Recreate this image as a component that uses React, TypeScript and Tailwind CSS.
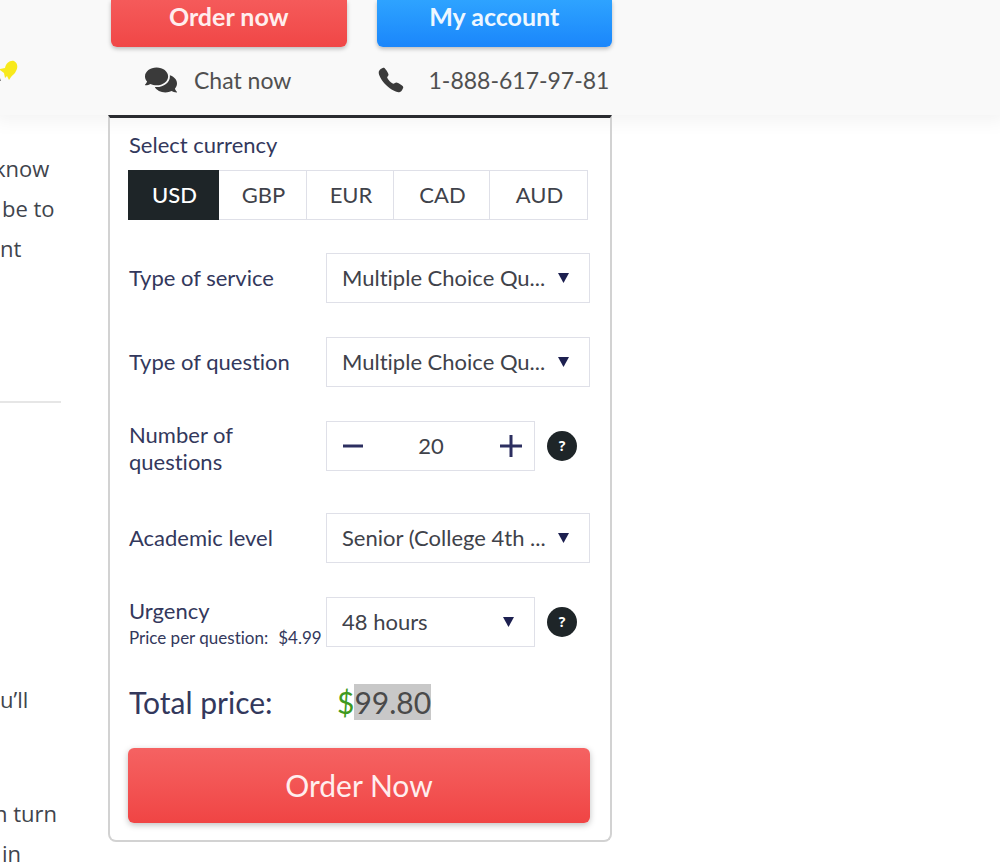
import { useState } from "react";
import type { ReactNode } from "react";
import { FaComments } from "react-icons/fa";
import { IoCall } from "react-icons/io5";

const CURRENCIES = ["USD", "GBP", "EUR", "CAD", "AUD"];

const PRICE_PER_QUESTION = 4.99;

function PinIcon() {
  return (
    <svg width="18" height="22" viewBox="0 0 18 22" aria-hidden="true">
      <path
        d="M0 9 L5 8 C6 3 10 0 14 1 C18 3 18 8 16 11 C15 14 12 15 11 17 L9 20 L7 16 L5 18 L4 13 L0 10 Z"
        fill="#f8e91c"
      />
      <path d="M0 18 L1 21 L0 21 Z" fill="#777777" />
    </svg>
  );
}

function Header() {
  return (
    <header className="grid h-[115px] grid-cols-[61px_504px] gap-x-[47px] bg-[#f9f9f9] shadow-[0_0_18px_6px_rgba(0,0,0,0.05)]">
      <div className="pt-[60px]">
        <PinIcon />
      </div>
      <div className="pl-[3px]">
        <div className="grid grid-cols-2 gap-x-[30px]">
          <button
            type="button"
            className="h-[47px] rounded-b-md bg-linear-to-b from-[#f55a5a] to-[#f04646] pb-4 text-[25px] leading-8 font-bold text-[#ffeeee] shadow-[0_2px_4px_rgba(0,0,0,0.25)]"
          >
            Order now
          </button>
          <button
            type="button"
            className="h-[47px] rounded-b-md bg-linear-to-b from-[#2ea3ff] to-[#1b86fb] pb-4 text-[25px] leading-8 font-bold text-[#eef7ff] shadow-[0_2px_4px_rgba(0,0,0,0.25)]"
          >
            My account
          </button>
        </div>
        <div className="mt-[17px] grid grid-cols-2 gap-x-[30px] text-[23px] leading-8 text-[#505050]">
          <a href="#chat" className="flex items-center gap-[17px] pl-[34px]">
            <FaComments className="size-8 text-[#3a3a3a]" />
            Chat now
          </a>
          <a
            href="tel:1-888-617-97-81"
            className="flex items-center gap-6 whitespace-nowrap"
          >
            <IoCall className="size-7 shrink-0 text-[#3a3a3a]" />
            1-888-617-97-81
          </a>
        </div>
      </div>
    </header>
  );
}

function Article() {
  return (
    <article className="overflow-hidden font-['Open_Sans',sans-serif] text-[22px] leading-10 whitespace-nowrap text-[#40444c]">
      <div className="mt-[33px] h-[255px] border-b-2 border-[#e6e6e6]">
        <p className="-ml-1.5">know</p>
        <p className="ml-0.5">be to</p>
        <p>nt</p>
      </div>
      <p className="mt-[276px]">u’ll</p>
      <p className="-ml-1.5 mt-[74px]">n turn</p>
      <p className="ml-0.5">in</p>
    </article>
  );
}

function Select({
  id,
  options,
  className,
}: {
  id: string;
  options: string[];
  className: string;
}) {
  return (
    <div className={`relative ${className}`}>
      <select
        id={id}
        className="h-[50px] w-full appearance-none border border-[#dfe0e8] bg-white pb-0.5 pl-[15px] text-[22px] text-[#40424a] outline-none"
      >
        {options.map((o) => (
          <option key={o}>{o}</option>
        ))}
      </select>
      <svg
        className="pointer-events-none absolute top-5 right-[21px]"
        width="11"
        height="10"
        viewBox="0 0 11 10"
        aria-hidden="true"
      >
        <path d="M0 0h11L5.5 10z" fill="#1d2050" />
      </svg>
    </div>
  );
}

function HelpButton({ label }: { label: string }) {
  return (
    <button
      type="button"
      aria-label={label}
      className="ml-3 size-[30px] rounded-full bg-[#1e2528] font-['Open_Sans',sans-serif] text-sm font-bold text-white"
    >
      ?
    </button>
  );
}

function Row({
  id,
  label,
  note,
  children,
}: {
  id: string;
  label: string;
  note?: ReactNode;
  children: ReactNode;
}) {
  return (
    <div className="grid grid-cols-[198px_1fr]">
      <div className="flex h-min min-h-12 flex-col justify-center pl-px leading-[27px] text-[#33385c]">
        <label htmlFor={id} className="max-w-44">
          {label}
        </label>
        {note}
      </div>
      <div className="flex h-[50px] items-center">{children}</div>
    </div>
  );
}

function OrderForm() {
  const [currency, setCurrency] = useState("USD");
  const [count, setCount] = useState(20);

  return (
    <form className="rounded-b-lg border-2 border-t-3 border-[#d2d2d2] border-t-[#2a2b30] pr-5 pb-[17px] pl-[18px] text-[22px] [font-variant-ligatures:none]">
      <fieldset>
        <legend className="pt-[13px] pb-3 pl-px leading-[27px] text-[#33385c]">
          Select currency
        </legend>
        <div className="grid h-[50px] grid-cols-[91px_88px_87px_96px_98px]">
          {CURRENCIES.map((c) => (
            <button
              key={c}
              type="button"
              aria-pressed={c === currency}
              onClick={() => setCurrency(c)}
              className={
                c === currency
                  ? "bg-[#1e2528] pb-0.5 pl-0.5 font-medium text-white"
                  : "border-y border-r border-[#dfe0e8] pb-0.5 pl-0.5 text-[#40424a]"
              }
            >
              {c}
            </button>
          ))}
        </div>
      </fieldset>

      <div className="mt-[33px] flex flex-col gap-[34px]">
        <Row id="service" label="Type of service">
          <Select id="service" options={["Multiple Choice Qu..."]} className="w-full" />
        </Row>
        <Row id="question" label="Type of question">
          <Select id="question" options={["Multiple Choice Qu..."]} className="w-full" />
        </Row>
        <div className="pb-1">
          <Row id="count" label="Number of questions">
            <div className="flex h-[50px] w-[209px] items-center border border-[#dfe0e8] pr-3 pl-[15px]">
              <button
                type="button"
                aria-label="Fewer questions"
                onClick={() => setCount(Math.max(1, count - 1))}
              >
                <svg width="22" height="22" viewBox="0 0 22 22" aria-hidden="true">
                  <path d="M1 11h20" stroke="#2c2f60" strokeWidth="3" />
                </svg>
              </button>
              <input
                id="count"
                type="text"
                value={count}
                onChange={(e) => setCount(Number(e.target.value) || 0)}
                className="w-full min-w-0 pr-0.5 pb-0.5 text-center text-[#40424a] outline-none"
              />
              <button
                type="button"
                aria-label="More questions"
                onClick={() => setCount(count + 1)}
              >
                <svg width="22" height="22" viewBox="0 0 22 22" aria-hidden="true">
                  <path d="M0 11h22M11 0v22" stroke="#2c2f60" strokeWidth="3" />
                </svg>
              </button>
            </div>
            <HelpButton label="About the number of questions" />
          </Row>
        </div>
        <Row id="level" label="Academic level">
          <Select id="level" options={["Senior (College 4th ..."]} className="w-full" />
        </Row>
        <Row
          id="urgency"
          label="Urgency"
          note={
            <p className="flex gap-2.5 text-[17px] leading-[27px] whitespace-nowrap">
              <span>Price per question:</span>
              <span>${PRICE_PER_QUESTION}</span>
            </p>
          }
        >
          <Select id="urgency" options={["48 hours"]} className="w-[209px]" />
          <HelpButton label="About the urgency" />
        </Row>
      </div>

      <div className="mt-[33px] grid grid-cols-[209px_1fr] text-3xl text-[#33385c]">
        <span className="pl-px">Total price:</span>
        <output htmlFor="count" className="text-[#3f9a20]">
          $
          <span className="bg-[#c8c8c8] text-[#4a4a4a]">
            {(count * PRICE_PER_QUESTION).toFixed(2)}
          </span>
        </output>
      </div>
      <button
        type="button"
        className="mt-7 h-[75px] w-full rounded-md bg-linear-to-b from-[#f56262] to-[#f04444] pb-0.5 text-3xl text-[#ffeeee] shadow-[0_2px_6px_rgba(0,0,0,0.25)]"
      >
        Order Now
      </button>
    </form>
  );
}

export default function App() {
  return (
    <div className="min-h-screen bg-white font-[Lato,sans-serif]">
      <Header />
      <main className="grid grid-cols-[61px_504px] items-start gap-x-[47px]">
        <Article />
        <OrderForm />
      </main>
    </div>
  );
}
